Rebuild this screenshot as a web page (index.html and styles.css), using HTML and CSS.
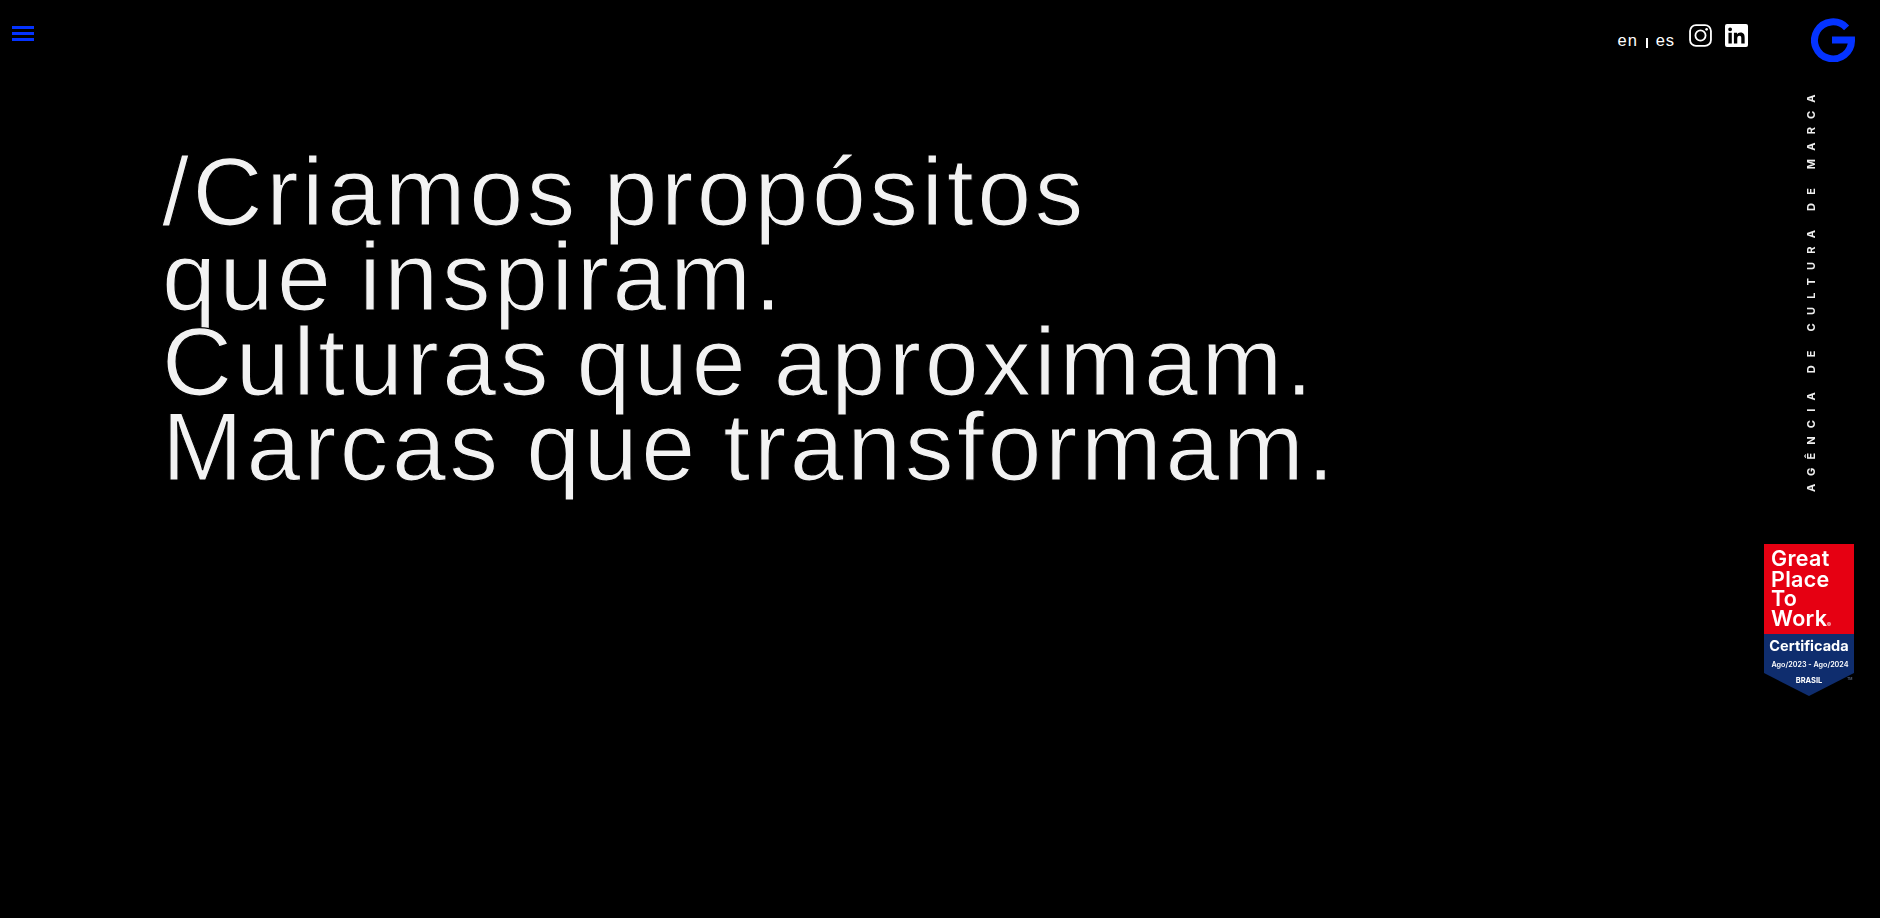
FILE: index.html
```html
<!DOCTYPE html>
<html lang="pt-BR">
<head>
<meta charset="utf-8">
<title>Agência de cultura de marca</title>
<link rel="stylesheet" href="styles.css">
</head>
<body>
<div class="page">
  <header class="topbar">
    <button class="menu" aria-label="Menu"><span></span><span></span><span></span></button>
    <div class="tools">
      <nav class="langs"><a>en</a><i></i><a>es</a></nav>
      <a class="social" aria-label="Instagram">
        <svg viewBox="0 0 24 24" width="23" height="23"><rect x="1.1" y="1.1" width="21.8" height="21.8" rx="6.2" fill="none" stroke="#fff" stroke-width="1.9"/><circle cx="12" cy="12" r="5.3" fill="none" stroke="#fff" stroke-width="1.9"/><circle cx="18.4" cy="5.6" r="1.4" fill="#fff"/></svg>
      </a>
      <a class="social" aria-label="LinkedIn">
        <svg viewBox="0 0 24 24" width="23" height="23"><path fill="#fff" d="M2 0h20a2 2 0 0 1 2 2v20a2 2 0 0 1-2 2H2a2 2 0 0 1-2-2V2a2 2 0 0 1 2-2z"/><path fill="#000" d="M3.6 9.2h3.5v11.2H3.6zM5.35 3.6a2 2 0 1 1 0 4 2 2 0 0 1 0-4zM9.3 9.2h3.3v1.55c.5-.9 1.7-1.85 3.5-1.85 3.7 0 4.4 2.4 4.4 5.6v5.9H17v-5.2c0-1.3 0-2.9-1.8-2.9s-2.4 1.4-2.4 2.8v5.3H9.3z"/></svg>
      </a>
      <a class="logo" aria-label="G">
        <svg viewBox="0 0 44 44" width="44" height="44"><path d="M35.6 9.8A18.5 18.5 0 1 0 40.5 22H21" fill="none" stroke="#0433ff" stroke-width="7"/></svg>
      </a>
    </div>
  </header>
  <div class="body">
    <main class="hero">
      <h1>/Criamos propósitos<br>que inspiram.<br>Culturas que aproximam.<br>Marcas que transformam.</h1>
    </main>
    <aside class="rail">
      <p class="tagline">AGÊNCIA DE CULTURA DE MARCA</p>
      <svg class="badge" viewBox="0 0 90 153" width="90" height="153">
        <rect width="90" height="90" fill="#e60012"/>
        <path d="M0 90h90v39l-45 23-45-23z" fill="#0f2d6e"/>
        <g class="gptw" fill="#fff">
          <text x="7" y="22">Great</text>
          <text x="7" y="43">Place</text>
          <text x="7" y="62">To</text>
          <text x="7" y="82">Work</text>
        </g>
        <text class="mark" x="63" y="83" fill="#fff">®</text>
        <text class="cert" x="45" y="107" text-anchor="middle" fill="#fff">Certificada</text>
        <text class="dates" x="46" y="123" text-anchor="middle" fill="#fff">Ago/2023 - Ago/2024</text>
        <text class="country" x="45" y="139" text-anchor="middle" fill="#fff">BRASIL</text>
        <text class="tm" x="83" y="136" fill="#7f8fb5">TM</text>
      </svg>
    </aside>
  </div>
</div>
</body>
</html>
```
FILE: styles.css
```css
* { box-sizing: border-box; }
html, body { margin: 0; background: #000; }
.page {
  width: 1880px;
  height: 918px;
  overflow: hidden;
  display: flex;
  flex-direction: column;
  color: #f2f2f2;
  font-family: "Inter", "Liberation Sans", sans-serif;
}
.topbar {
  display: flex;
  justify-content: space-between;
  align-items: flex-start;
  height: 90px;
  padding: 18px 25px 0 12px;
}
.menu {
  display: flex;
  flex-direction: column;
  gap: 3px;
  width: 22px;
  margin-top: 8px;
  padding: 0;
  border: 0;
  background: none;
}
.menu span { display: block; height: 3px; background: #0433ff; }
.tools { display: flex; align-items: flex-start; }
.langs {
  display: flex;
  align-items: center;
  gap: 8px;
  margin-top: 10px;
  margin-right: 14px;
  color: #fff;
  font-family: "Liberation Sans", sans-serif;
  font-size: 16.5px;
  letter-spacing: 0.9px;
  line-height: 24px;
}
.langs i { display: block; width: 2px; height: 10px; margin-top: 5px; background: #fff; }
.social { display: block; height: 23px; margin-top: 6px; margin-right: 13px; }
.social + .social { margin-right: 63px; }
.logo { display: block; height: 44px; filter: blur(0.5px); }
.body {
  flex: 1;
  display: flex;
  justify-content: space-between;
  min-height: 0;
}
.hero { padding: 59px 0 0 162px; }
h1 {
  margin: 0;
  font-family: "Liberation Sans", sans-serif;
  font-size: 97px;
  font-weight: 400;
  line-height: 85px;
  letter-spacing: 3.6px;
  word-spacing: -6px;
  white-space: nowrap;
  -webkit-text-stroke: 1.2px #000;
}
.rail {
  display: flex;
  flex-direction: column;
  align-items: flex-end;
  padding-right: 26px;
}
.tagline {
  margin: 0 36px 0 0;
  height: 402px;
  writing-mode: vertical-rl;
  transform: rotate(180deg);
  color: #eee;
  font-size: 11px;
  font-weight: 700;
  letter-spacing: 8.2px;
  line-height: 14px;
  white-space: nowrap;
  filter: blur(0.3px);
}
.badge { display: block; margin-top: 52px; filter: blur(0.4px); }
.gptw { font-size: 21.5px; font-weight: 600; letter-spacing: 0.3px; }
.mark { font-size: 6px; }
.cert { font-size: 14.5px; font-weight: 700; }
.dates { font-size: 7.2px; font-weight: 600; }
.country { font-size: 7.5px; font-weight: 700; }
.tm { font-size: 3.5px; }
```
